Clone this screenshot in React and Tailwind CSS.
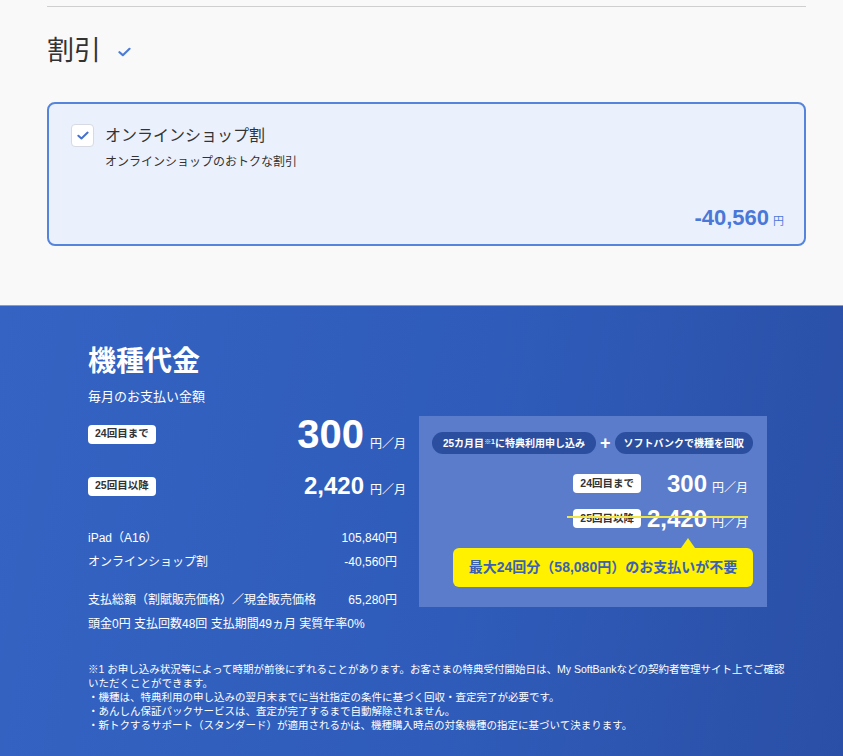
import React from 'react';

const CheckMark = ({ className }) => (
  <svg viewBox="0 0 14 10" className={className} fill="none">
    <path d="M1.6 5.2 L5.2 8.4 L12.4 1.6" stroke="currentColor" strokeWidth="2.3" strokeLinecap="round" strokeLinejoin="round" />
  </svg>
);

const Badge = ({ children }) => (
  <span className="flex h-[19px] items-center rounded-[4px] bg-white px-[7px] text-[10.5px] font-bold text-[#333]">
    {children}
  </span>
);

const notes = [
  '※1 お申し込み状況等によって時期が前後にずれることがあります。お客さまの特典受付開始日は、My SoftBankなどの契約者管理サイト上でご確認',
  'いただくことができます。',
  '・機種は、特典利用の申し込みの翌月末までに当社指定の条件に基づく回収・査定完了が必要です。',
  '・あんしん保証パックサービスは、査定が完了するまで自動解除されません。',
  '・新トクするサポート（スタンダード）が適用されるかは、機種購入時点の対象機種の指定に基づいて決まります。',
];

export default function App() {
  return (
    <div className="min-h-[756px] bg-[#f9f9f9] font-['Liberation_Sans','Noto_Sans_CJK_JP',sans-serif]">
      {/* Discount section */}
      <section className="pt-[6px] pb-[59px]">
        <div className="ml-[47px] w-[759px]">
          <div className="border-t border-[#cfcfcf]" />
          <div className="mt-[25px] flex h-[38px] items-center">
            <h2 className="text-[27px] leading-[38px] text-[#333]">割引</h2>
            <CheckMark className="ml-[17px] mt-[2px] h-[10px] w-[13px] text-[#4a7bd9]" />
          </div>

          <div className="mt-[32px] flex h-[144px] flex-col justify-between rounded-[8px] border-2 border-[#5484dc] bg-[#eaf1fd] pt-[20px] pl-[22px] pr-[20px] pb-[13px]">
            <div className="flex items-start gap-[11px]">
              <div className="flex h-[23px] w-[23px] items-center justify-center rounded-[4px] border-[1.5px] border-[#d6dae2] bg-white">
                <CheckMark className="h-[9px] w-[12px] text-[#4470d0]" />
              </div>
              <div>
                <p className="text-[16px] leading-[23px] text-[#333]">オンラインショップ割</p>
                <p className="mt-[6px] text-[12px] leading-[18px] text-[#333]">オンラインショップのおトクな割引</p>
              </div>
            </div>
            <div className="flex items-baseline justify-end text-[#4a78d8]">
              <span className="text-[22px] font-bold leading-[26px]">-40,560</span>
              <span className="ml-[4px] text-[11px]">円</span>
            </div>
          </div>
        </div>
      </section>

      {/* Device price section */}
      <section className="min-h-[451px] border-t border-[#7f9dd8] bg-[linear-gradient(100deg,#3463c3_0%,#2f5cba_55%,#2a4fa6_100%)] pt-[36px] pb-[30px] text-white">
        <div className="ml-[88px] w-[679px]">
          <h3 className="text-[28px] font-bold leading-[40px]">機種代金</h3>
          <p className="mt-[5px] text-[13px] leading-[20px]">毎月のお支払い金額</p>

          <div className="mt-[9px] flex items-start gap-[13px]">
            {/* Left column */}
            <div className="w-[318px]">
              <div className="flex h-[36px] items-center justify-between">
                <Badge>24回目まで</Badge>
                <div className="flex items-baseline">
                  <span className="text-[40px] font-bold leading-[40px]">300</span>
                  <span className="ml-[6px] text-[12px]">円／月</span>
                </div>
              </div>
              <div className="mt-[20px] flex h-[28px] items-center justify-between">
                <Badge>25回目以降</Badge>
                <div className="flex items-baseline">
                  <span className="text-[24px] font-bold leading-[28px]">2,420</span>
                  <span className="ml-[6px] text-[12px]">円／月</span>
                </div>
              </div>

              <div className="mt-[26px] pr-[9px] text-[12px]">
                <div className="flex h-[24px] items-center justify-between">
                  <span>iPad（A16）</span>
                  <span>105,840円</span>
                </div>
                <div className="flex h-[24px] items-center justify-between">
                  <span>オンラインショップ割</span>
                  <span>-40,560円</span>
                </div>
                <div className="mt-[14px] flex h-[24px] items-center justify-between">
                  <span>支払総額（割賦販売価格）／現金販売価格</span>
                  <span>65,280円</span>
                </div>
                <div className="flex h-[24px] items-center">
                  <span>頭金0円 支払回数48回 支払期間49ヵ月 実質年率0%</span>
                </div>
              </div>
            </div>

            {/* Right panel */}
            <div className="w-[348px] bg-[#5a7ccb] pt-[16px] pb-[20px] pl-[13px] pr-[14px]">
              <div className="flex items-center">
                <span className="flex h-[22px] items-center rounded-full bg-[#2b4e9e] px-[11px] text-[10px] font-bold whitespace-nowrap">
                  25カ月目<sup className="relative -top-[1px] text-[7px]">※1</sup>に特典利用申し込み
                </span>
                <span className="w-[19px] text-center text-[18px] font-bold leading-[22px]">+</span>
                <span className="flex h-[22px] items-center rounded-full bg-[#2b4e9e] px-[9px] text-[10px] font-bold whitespace-nowrap">
                  ソフトバンクで機種を回収
                </span>
              </div>

              <div className="mt-[16px] flex h-[27px] items-center justify-end pr-[5px]">
                <Badge>24回目まで</Badge>
                <div className="flex items-baseline">
                  <span className="w-[66px] text-right text-[24px] font-bold leading-[27px]">300</span>
                  <span className="ml-[5px] text-[12px]">円／月</span>
                </div>
              </div>
              <div className="relative mt-[8px] flex h-[27px] items-center justify-end pr-[5px]">
                <Badge>25回目以降</Badge>
                <div className="flex items-baseline">
                  <span className="w-[66px] text-right text-[24px] font-bold leading-[27px]">2,420</span>
                  <span className="ml-[5px] text-[12px]">円／月</span>
                </div>
                <span className="absolute top-[11px] right-[5px] left-[135px] h-[2px] bg-[#efe64a]" />
              </div>

              <div className="relative mt-[16px] ml-auto flex h-[39px] w-[300px] items-center justify-center rounded-[6px] bg-[#fff100] text-[14px] font-bold text-[#3a61b3]">
                <span className="absolute -top-[10px] left-[228px] h-0 w-0 border-x-[7px] border-b-[10px] border-x-transparent border-b-[#fff100]" />
                最大24回分（58,080円）のお支払いが不要
              </div>
            </div>
          </div>

          <div className="mt-[26px] text-[10.5px] leading-[14px]">
            {notes.map((line, i) => (
              <p key={i} className="whitespace-nowrap">{line}</p>
            ))}
          </div>
        </div>
      </section>
    </div>
  );
}
